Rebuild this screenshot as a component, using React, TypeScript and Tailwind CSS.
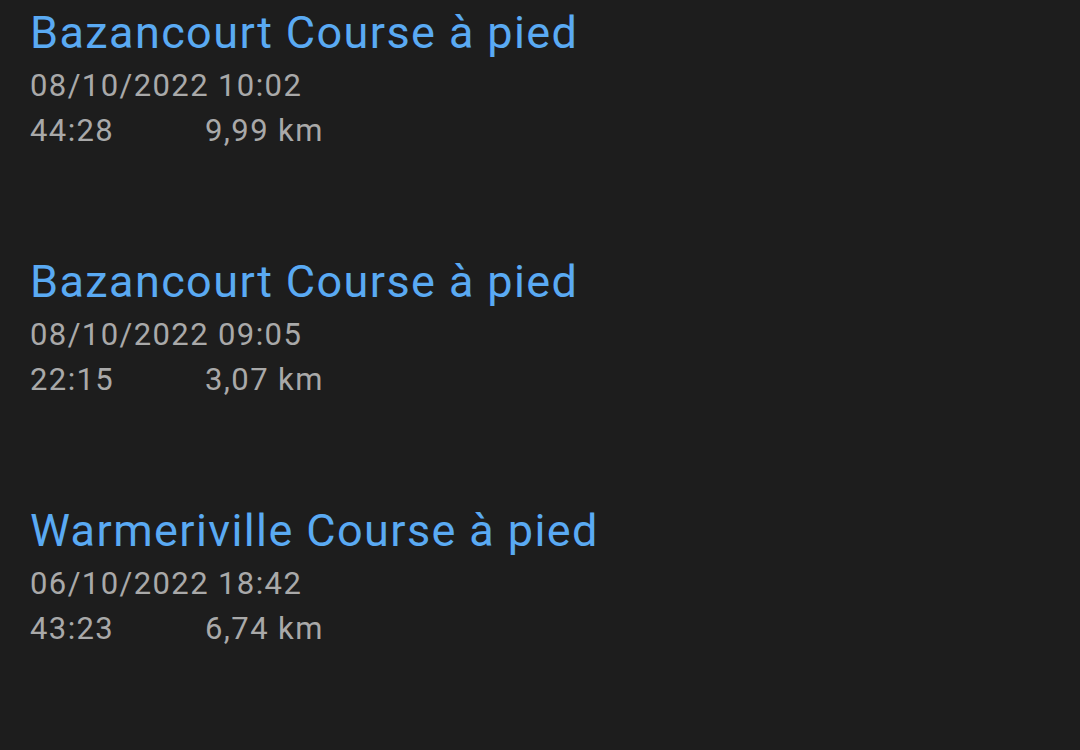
import React from "react";

interface Activity {
  title: string;
  date: string;
  duration: string;
  distance: string;
}

const activities: Activity[] = [
  { title: "Bazancourt Course à pied", date: "08/10/2022 10:02", duration: "44:28", distance: "9,99 km" },
  { title: "Bazancourt Course à pied", date: "08/10/2022 09:05", duration: "22:15", distance: "3,07 km" },
  { title: "Warmeriville Course à pied", date: "06/10/2022 18:42", duration: "43:23", distance: "6,74 km" },
];

const App = () => {
  return (
    <div
      className="w-[1080px] h-[750px] overflow-hidden bg-[#1d1d1d] pl-[30px]"
      style={{ fontFamily: "Roboto, 'Noto Sans', sans-serif" }}
    >
      {activities.map((a, i) => (
        <div key={i} className="h-[249px] pt-[7px]">
          <div className="text-[45px] leading-[52px] tracking-[1.4px] text-[#5aaaf3]">{a.title}</div>
          <div className="mt-[5px] text-[31px] leading-[44px] tracking-[1.4px] text-[#a9a9a9]">{a.date}</div>
          <div className="flex text-[31px] leading-[45px] tracking-[1.4px] text-[#a9a9a9]">
            <span className="w-[175px]">{a.duration}</span>
            <span>{a.distance}</span>
          </div>
        </div>
      ))}
    </div>
  );
};

export default App;
